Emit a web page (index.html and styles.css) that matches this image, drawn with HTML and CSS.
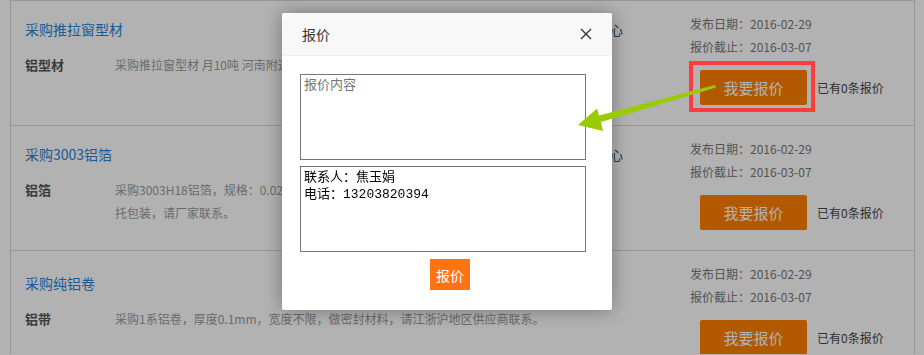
FILE: index.html
```html
<!DOCTYPE html>
<html lang="zh-CN">
<head>
    <meta charset="UTF-8">
    <title>采购信息</title>
    <link rel="stylesheet" href="styles.css">
</head>
<body>
    <div class="buy-list">
        <div class="buy-item">
            <div class="buy-main">
                <div class="buy-head">
                    <a class="buy-title" href="#">采购推拉窗型材</a>
                    <span class="buy-org">发布单位：河南铝业采购中心</span>
                </div>
                <div class="buy-detail">
                    <span class="buy-cat">铝型材</span>
                    <p class="buy-desc">采购推拉窗型材 月10吨 河南附近厂家优先，有意者请联系。</p>
                </div>
            </div>
            <div class="buy-side">
                <div class="buy-date">发布日期：2016-02-29</div>
                <div class="buy-date">报价截止：2016-03-07</div>
                <div class="buy-action">
                    <button class="quote-btn">我要报价</button>
                    <span class="quote-count">已有0条报价</span>
                </div>
            </div>
        </div>

        <div class="buy-item">
            <div class="buy-main">
                <div class="buy-head">
                    <a class="buy-title" href="#">采购3003铝箔</a>
                    <span class="buy-org">发布单位：河南铝业采购中心</span>
                </div>
                <div class="buy-detail">
                    <span class="buy-cat">铝箔</span>
                    <p class="buy-desc">采购3003H18铝箔，规格：0.02*500mm，双面光，月用量约2000kg,木<br>托包装，请厂家联系。</p>
                </div>
            </div>
            <div class="buy-side">
                <div class="buy-date">发布日期：2016-02-29</div>
                <div class="buy-date">报价截止：2016-03-07</div>
                <div class="buy-action">
                    <button class="quote-btn">我要报价</button>
                    <span class="quote-count">已有0条报价</span>
                </div>
            </div>
        </div>

        <div class="buy-item">
            <div class="buy-main">
                <div class="buy-head">
                    <a class="buy-title" href="#">采购纯铝卷</a>
                </div>
                <div class="buy-detail">
                    <span class="buy-cat">铝带</span>
                    <p class="buy-desc">采购1系铝卷，厚度0.1mm，宽度不限，做密封材料，请江浙沪地区供应商联系。</p>
                </div>
            </div>
            <div class="buy-side">
                <div class="buy-date">发布日期：2016-02-29</div>
                <div class="buy-date">报价截止：2016-03-07</div>
                <div class="buy-action">
                    <button class="quote-btn">我要报价</button>
                    <span class="quote-count">已有0条报价</span>
                </div>
            </div>
        </div>
    </div>

    <div class="mask"></div>

    <div class="dialog">
        <div class="dialog-header">
            <span class="dialog-title">报价</span>
            <svg class="dialog-close" width="12" height="12" viewBox="0 0 12 12">
                <path d="M1 1 L11 11 M11 1 L1 11" stroke="#333" stroke-width="1.4" fill="none"/>
            </svg>
        </div>
        <div class="dialog-body">
            <textarea class="dialog-text" placeholder="报价内容"></textarea>
            <textarea class="dialog-text">联系人：焦玉娟
电话：13203820394</textarea>
            <button class="dialog-submit">报价</button>
        </div>
    </div>

    <!-- 标注：红框和箭头 -->
    <div class="mark-box"></div>
    <svg class="mark-arrow" width="924" height="355" viewBox="0 0 924 355">
        <polygon points="715,85 599,115.5 597,108.5 578,125 603,131 601,122 716,87.5" fill="#99cc00"/>
    </svg>
</body>
</html>
```

FILE: styles.css
```css
* {
    margin: 0;
    padding: 0;
    box-sizing: border-box;
}

body {
    font-family: "Noto Sans CJK SC", "Noto Sans", sans-serif;
    background: #ffffff;
    width: 924px;
    height: 355px;
    overflow: hidden;
}

.buy-list {
    margin-left: 10px;
    width: 905px;
    height: 354px;
    overflow: hidden;
    border: 1px solid #d9d9d9;
    border-bottom: none;
}

.buy-item {
    display: flex;
    height: 125px;
    border-bottom: 1px solid #d9d9d9;
}

.buy-item:last-child {
    padding-top: 4px;
}

.buy-item:last-child .buy-side {
    padding-top: 7px;
}

.buy-main {
    flex: 1;
    padding: 18px 30px 0 14px;
}

.buy-head {
    display: flex;
    justify-content: space-between;
    align-items: center;
    height: 20px;
    padding-right: 37px;
}

.buy-title {
    font-size: 14px;
    line-height: 20px;
    color: #2683d6;
    text-decoration: none;
}

.buy-org {
    font-size: 13px;
    color: #444;
}

.buy-detail {
    display: flex;
    margin-top: 14px;
}

.buy-cat {
    width: 90px;
    flex-shrink: 0;
    font-size: 13px;
    line-height: 23px;
    font-weight: bold;
    color: #555;
}

.buy-desc {
    font-size: 12px;
    line-height: 23px;
    color: #999;
}

.buy-side {
    width: 224px;
    padding-top: 11px;
}

.buy-date {
    font-size: 12px;
    line-height: 23px;
    color: #777;
}

.buy-action {
    display: flex;
    align-items: center;
    margin-top: 12px;
    padding-left: 10px;
}

.quote-btn {
    width: 107px;
    height: 35px;
    border: none;
    border-radius: 2px;
    background: #ff8000;
    color: #ffffff;
    font-family: inherit;
    font-size: 15px;
    cursor: pointer;
}

.quote-count {
    margin-left: 10px;
    font-size: 12px;
    color: #444;
}

.mask {
    position: fixed;
    top: 0;
    left: 0;
    right: 0;
    bottom: 0;
    background: rgba(0, 0, 0, 0.3);
}

.dialog {
    position: fixed;
    left: 282px;
    top: 13px;
    width: 330px;
    height: 297px;
    background: #ffffff;
    border-radius: 2px;
    box-shadow: 0 0 20px rgba(0, 0, 0, 0.35);
}

.dialog-header {
    display: flex;
    justify-content: space-between;
    align-items: center;
    height: 43px;
    padding: 0 20px;
    background: #f8f8f8;
    border-bottom: 1px solid #eeeeee;
    border-radius: 2px 2px 0 0;
}

.dialog-title {
    font-size: 14px;
    color: #333;
}

.dialog-body {
    display: flex;
    flex-direction: column;
    align-items: flex-start;
    padding: 18px 0 0 18px;
}

.dialog-text {
    width: 286px;
    height: 86px;
    margin-bottom: 6px;
    padding: 2px 3px;
    border: 1px solid #767676;
    font-family: "Liberation Mono", "Noto Sans CJK SC", monospace;
    font-size: 13px;
    line-height: 17px;
    color: #000;
    resize: none;
}

.dialog-text::placeholder {
    color: #757575;
}

.dialog-submit {
    align-self: center;
    margin: 1px 0 0 -12px;
    width: 40px;
    height: 31px;
    border: none;
    background: #ff7411;
    color: #ffffff;
    font-family: inherit;
    font-size: 14px;
}

.mark-box {
    position: absolute;
    left: 689px;
    top: 61px;
    width: 126px;
    height: 51px;
    border: 4px solid #ff3c3c;
}

.mark-arrow {
    position: absolute;
    left: 0;
    top: 0;
}
```
